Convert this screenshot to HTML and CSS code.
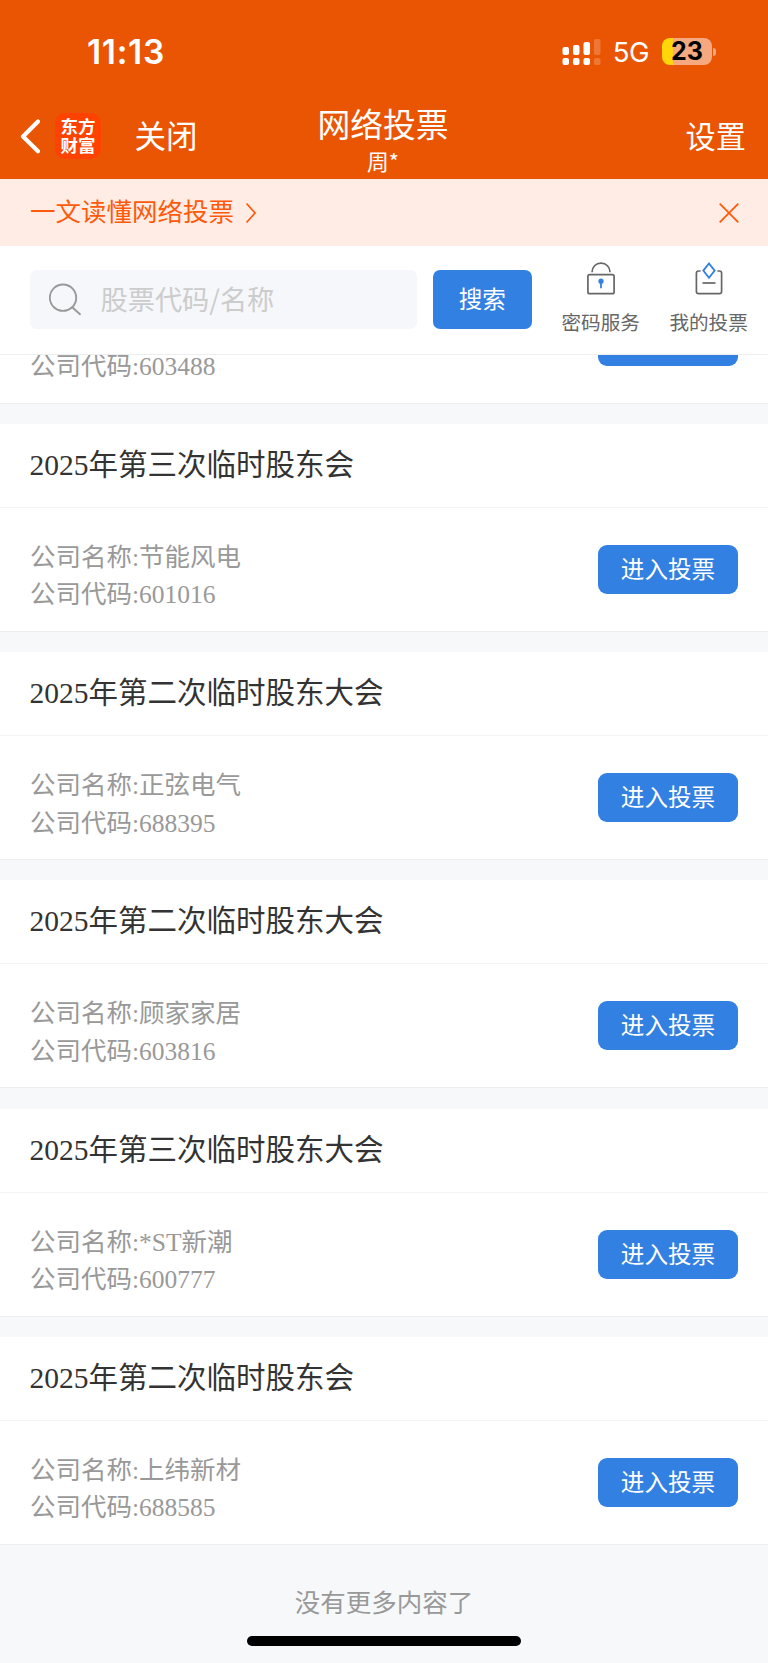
FILE: index.html
```html
<!DOCTYPE html>
<html lang="zh-CN">
<head>
  <meta charset="UTF-8">
  <meta name="viewport" content="width=device-width,initial-scale=1.0">
  <title>网络投票</title>
  <link rel="stylesheet" href="styles.css">
</head>
<body>
  <header class="header">
    <!-- 状态栏 -->
    <div class="status-bar">
      <span class="time">11:13</span>
      <svg class="signal" width="39" height="28" viewBox="0 0 39 28" fill="#fff">
        <rect x="0.5" y="9" width="6.5" height="8" rx="2"/>
        <rect x="11" y="7" width="6.5" height="10" rx="2"/>
        <rect x="21.5" y="4" width="6.5" height="13" rx="2"/>
        <rect x="32" y="1" width="6.5" height="16" rx="2" opacity="0.2"/>
        <rect x="0.5" y="20" width="6.5" height="7" rx="2"/>
        <rect x="11" y="20" width="6.5" height="7" rx="2"/>
        <rect x="21.5" y="20" width="6.5" height="7" rx="2"/>
        <rect x="32" y="20" width="6.5" height="7" rx="2" opacity="0.2"/>
      </svg>
      <span class="network">5G</span>
      <span class="battery">23</span>
      <span class="battery-tip"></span>
    </div>
    <!-- 导航栏 -->
    <nav class="nav">
      <div class="nav-left">
        <svg class="back" width="20" height="35" viewBox="0 0 20 35" fill="none" stroke="#fff" stroke-width="4.2" stroke-linecap="round" stroke-linejoin="round">
          <path d="M18 2.5 3 17.5 18 32.2"/>
        </svg>
        <div class="logo"><span>东方</span><span>财富</span></div>
        <span class="close-page">关闭</span>
      </div>
      <div class="nav-title">
        <h1>网络投票</h1>
        <p>周*</p>
      </div>
      <span class="settings">设置</span>
    </nav>
  </header>

  <div class="notice">
    <a class="notice-link">一文读懂网络投票</a>
    <svg class="notice-arrow" width="12" height="22" viewBox="0 0 12 22" fill="none" stroke="#ff5a0c" stroke-width="1.7">
      <path d="M1.5 1.5 10 11 1.5 20.5"/>
    </svg>
    <svg class="notice-close" width="20" height="20" viewBox="0 0 20 20" fill="none" stroke="#ff5a0c" stroke-width="1.8">
      <path d="M.7.7 19.3 19.3M19.3.7.7 19.3"/>
    </svg>
  </div>

  <!-- 搜索栏 -->
  <div class="toolbar">
    <div class="search-box">
      <svg width="33" height="33" viewBox="0 0 33 33" fill="none" stroke="#999" stroke-width="1.9" stroke-linecap="round">
        <circle cx="14" cy="14.7" r="13.2"/>
        <path d="M23.500 24.5 31 31.2"/>
      </svg>
      <input type="text" class="search-input" placeholder="股票代码/名称">
    </div>
    <button class="search-btn">搜索</button>
    <a class="tool tool-password">
      <svg width="28" height="33" viewBox="0 0 28 33" fill="none" stroke="#666" stroke-width="1.7">
        <path d="M5 10.2C5 5 8.8 1.2 14 1.2s9 3.8 9 9"/>
        <rect x="0.9" y="12.7" width="26.2" height="19" rx="1.8"/>
        <circle cx="14" cy="19.2" r="2.6" fill="#3280e1" stroke="none"/>
        <path d="M14 19v7.2" stroke="#3280e1" stroke-width="1.8"/>
      </svg>
      <span>密码服务</span>
    </a>
    <a class="tool tool-mine">
      <svg width="28" height="33" viewBox="0 0 28 33" fill="none" stroke="#666" stroke-width="1.7">
        <path d="M5.6 9H3.6Q1.4 9 1.4 11.2V29.5Q1.4 31.7 3.6 31.7H24.4Q26.6 31.7 26.6 29.5V11.2Q26.6 9 24.4 9H22.4"/>
        <path d="M7.500 21h13"/>
        <path d="M14 1.5 19.7 8.6 14 15.7 8.3 8.6Z" stroke="#3280e1" stroke-width="1.8"/>
      </svg>
      <span>我的投票</span>
    </a>
  </div>

  <!-- 股东会列表 -->
  <main class="list">
    <section class="card card-clipped">
      <div class="card-body">
        <div class="company">
          <p>公司代码:603488</p>
        </div>
        <button class="vote-btn"></button>
      </div>
    </section>
    <section class="card">
      <h2>2025年第三次临时股东会</h2>
      <div class="card-body">
        <div class="company">
          <p>公司名称:节能风电</p>
          <p>公司代码:601016</p>
        </div>
        <button class="vote-btn">进入投票</button>
      </div>
    </section>
    <section class="card">
      <h2>2025年第二次临时股东大会</h2>
      <div class="card-body">
        <div class="company">
          <p>公司名称:正弦电气</p>
          <p>公司代码:688395</p>
        </div>
        <button class="vote-btn">进入投票</button>
      </div>
    </section>
    <section class="card">
      <h2>2025年第二次临时股东大会</h2>
      <div class="card-body">
        <div class="company">
          <p>公司名称:顾家家居</p>
          <p>公司代码:603816</p>
        </div>
        <button class="vote-btn">进入投票</button>
      </div>
    </section>
    <section class="card">
      <h2>2025年第三次临时股东大会</h2>
      <div class="card-body">
        <div class="company">
          <p>公司名称:*ST新潮</p>
          <p>公司代码:600777</p>
        </div>
        <button class="vote-btn">进入投票</button>
      </div>
    </section>
    <section class="card">
      <h2>2025年第二次临时股东会</h2>
      <div class="card-body">
        <div class="company">
          <p>公司名称:上纬新材</p>
          <p>公司代码:688585</p>
        </div>
        <button class="vote-btn">进入投票</button>
      </div>
    </section>
  </main>

  <footer class="footer">
    <p>没有更多内容了</p>
    <div class="home-bar"></div>
  </footer>
</body>
</html>
```
FILE: styles.css
```css
* { box-sizing: border-box; }
body { margin: 0; height: 1663px; overflow: hidden; background: #f7f8fa; font-family: "Liberation Serif", "Noto Sans CJK SC", sans-serif; }
h1, h2, p { margin: 0; font-weight: normal; }
svg { display: block; flex: none; }
button { border: none; padding: 0 0 3px; color: #fff; background: #3280e1; font-family: "Noto Sans CJK SC", sans-serif; font-size: 23.6px; }

/* 顶部 */
.header { height: 179px; background: #ea5504; color: #fff; font-family: "Noto Sans CJK SC", sans-serif; }
.status-bar { display: flex; align-items: center; height: 103px; padding: 0 52px 0 87px; }
.time { font: 600 33.5px/40px Inter, sans-serif; letter-spacing: 0.7px; }
.signal { margin-left: auto; }
.network { margin-left: 12px; font: 400 27.5px/32px Inter, sans-serif; letter-spacing: -0.5px; }
.battery { width: 50px; height: 27px; margin-left: 13px; border-radius: 8px; background: linear-gradient(to right, #ffd60a 11px, #f6a881 11px); color: #000; font: 700 25px/27px Inter, sans-serif; text-align: center; }
.battery-tip { width: 3px; height: 8px; margin-left: 1px; border-radius: 0 3px 3px 0; background: #f6a881; }
.nav { display: grid; grid-template-columns: 1fr auto 1fr; height: 76px; padding: 0 22px 0 20px; }
.nav-left { display: flex; align-items: center; height: 66px; }
.logo { display: flex; flex-direction: column; width: 46px; height: 46px; margin-left: 15px; padding-top: 3px; border-radius: 10px; background: #ff4200; font-size: 17.5px; font-weight: 700; line-height: 19px; text-align: center; }
.close-page { margin-left: 33.5px; font-size: 31.5px; line-height: 62px; height: 66px; }
.nav-title { text-align: center; }
.nav-title h1 { height: 44px; font-size: 32.8px; line-height: 40px; }
.nav-title p { font-size: 21.8px; line-height: 28px; }
.settings { justify-self: end; font-size: 30.2px; line-height: 64px; }

/* 提示条 */
.notice { display: flex; align-items: center; height: 67px; padding: 0 29.5px 0 30px; background: #ffede5; color: #ff5a0c; }
.notice-link { font-size: 25.5px; line-height: 67px; }
.notice-arrow { margin-left: 11px; }
.notice-close { margin-left: auto; }

.toolbar { display: flex; align-items: flex-start; height: 108.5px; padding: 0 0 0 30px; border-bottom: 1px solid #eee; background: #fff; }
.search-box { display: flex; align-items: center; width: 387px; height: 59px; margin-top: 24px; padding-left: 19px; border-radius: 7px; background: #f6f7fa; }
.search-input { width: 300px; margin-left: 18.5px; padding: 0 0 4px; border: none; background: none; font-family: "Noto Sans CJK SC", sans-serif; font-size: 27.2px; }
.search-input::placeholder { color: #ccc; }
.search-btn { width: 98.5px; height: 59px; margin: 24px 0 0 16px; border-radius: 7px; }
.tool { display: flex; flex-direction: column; align-items: center; padding-top: 15.5px; color: #666; font-size: 19.6px; }
.tool span { margin-top: 15px; line-height: 28px; }
.tool-password { margin-left: 30px; }
.tool-mine { margin-left: 29.5px; }

/* 列表 */
.card { height: 208px; margin-bottom: 20.3px; background: #fff; }
.card h2 { height: 84px; padding-left: 29.5px; border-bottom: 1.5px solid #f2f3f4; color: #333; font-size: 29.5px; line-height: 83px; }
.card-body { display: flex; justify-content: space-between; height: 124px; padding: 31px 30px 0 30px; border-bottom: 1px solid #eee; }
.company { color: #999; font-size: 25.5px; line-height: 37.5px; }
.vote-btn { width: 140px; height: 49px; margin-top: 6px; border-radius: 9px; }
/* 被搜索栏遮住上半部分的卡片 */
.card-clipped { display: flex; flex-direction: column; justify-content: flex-end; height: 49px; overflow: hidden; }
.card-clipped .card-body { flex: none; }
.card-clipped .company { padding-top: 37.5px; }

.footer { display: flex; flex-direction: column; align-items: center; margin-top: -20.3px; padding-top: 40px; color: #999; font-size: 25.5px; line-height: 38px; }
.home-bar { width: 274px; height: 10px; margin-top: 13px; border-radius: 5px; background: #000; }
```
